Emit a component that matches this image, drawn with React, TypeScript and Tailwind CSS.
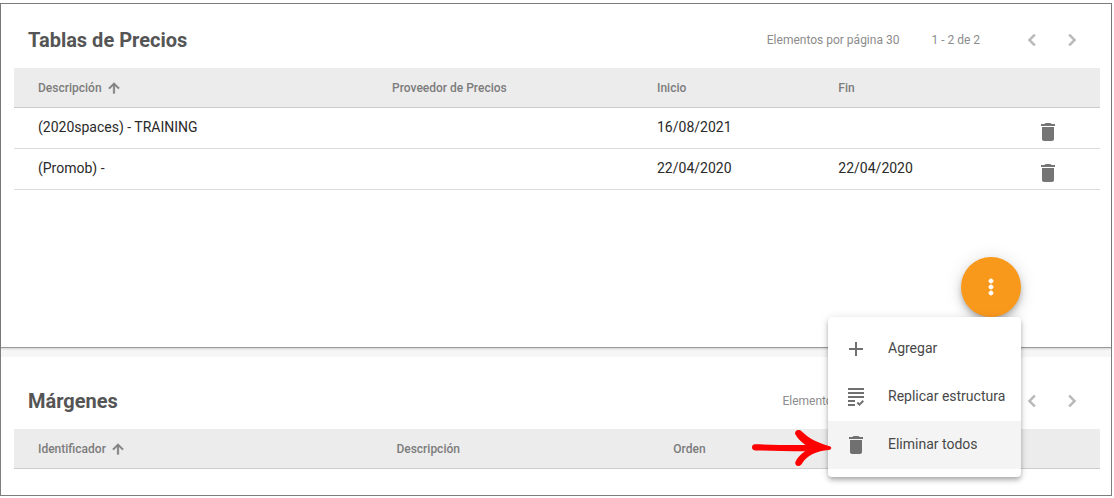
import type { ReactNode } from 'react';
import {
  MdAdd,
  MdArrowUpward,
  MdChevronLeft,
  MdChevronRight,
  MdDelete,
  MdGrading,
  MdMoreVert,
} from 'react-icons/md';

type PriceTable = { description: string; provider: string; start: string; end: string };

const priceTables: PriceTable[] = [
  { description: '(2020spaces) - TRAINING', provider: '', start: '16/08/2021', end: '' },
  { description: '(Promob) -', provider: '', start: '22/04/2020', end: '22/04/2020' },
];

function Pager({ range }: { range?: string }) {
  return (
    <div className="flex items-center text-xs text-[#8c8c8c]">
      <span className="mr-8">Elementos por página 30</span>
      <span className={range ? 'mr-8' : 'mr-8 w-[33px]'}>{range}</span>
      <button type="button" aria-label="Página anterior" className="flex size-10 items-center justify-center text-[#b9b9b9]">
        <MdChevronLeft size={24} className="[&>path:last-child]:stroke-[0.6]" />
      </button>
      <button type="button" aria-label="Página siguiente" className="flex size-10 items-center justify-center text-[#b9b9b9]">
        <MdChevronRight size={24} className="[&>path:last-child]:stroke-[0.6]" />
      </button>
    </div>
  );
}

function SectionHeader({ title, range }: { title: string; range?: string }) {
  return (
    <header className="flex h-16 items-center justify-between pt-2 pr-[19px] pl-[27px]">
      <h2 className="text-xl font-bold text-[#555]">{title}</h2>
      <Pager range={range} />
    </header>
  );
}

function HeadCell({ children, sorted }: { children?: ReactNode; sorted?: boolean }) {
  return (
    <th scope="col" className="h-[39px] pt-0.5 pl-6 text-left text-xs font-medium text-[#7c7c7c]">
      <span className="flex items-center gap-1">
        {children}
        {sorted && <MdArrowUpward size={16} className="[&>path:last-child]:stroke-1" />}
      </span>
    </th>
  );
}

function MenuItem({ icon, label, active }: { icon: ReactNode; label: string; active?: boolean }) {
  return (
    <button
      type="button"
      role="menuitem"
      className={`flex h-12 w-full items-center gap-5 pl-4 text-left text-sm whitespace-nowrap text-[#484848] ${active ? 'bg-[#f4f4f4]' : 'bg-white'}`}
    >
      <span className="w-6 text-[#707070]">{icon}</span>
      <span className="pb-0.5">{label}</span>
    </button>
  );
}

function ActionsMenu() {
  return (
    <div className="absolute right-[90px] bottom-[30px] z-10">
      <button
        type="button"
        aria-label="Acciones"
        className="flex size-[60px] items-center justify-center rounded-full bg-[#f9991c] text-white shadow-[0_3px_5px_-1px_rgba(0,0,0,0.2),0_6px_10px_rgba(0,0,0,0.14),0_1px_18px_rgba(0,0,0,0.12)]"
      >
        <MdMoreVert size={24} className="[&>path:last-child]:stroke-1" />
      </button>
      <div
        role="menu"
        className="absolute top-full right-0 w-[193px] rounded bg-white py-2 shadow-[0_2px_4px_-1px_rgba(0,0,0,0.2),0_4px_5px_rgba(0,0,0,0.14),0_1px_10px_rgba(0,0,0,0.12)]"
      >
        <MenuItem icon={<MdAdd size={24} />} label="Agregar" />
        <MenuItem icon={<MdGrading size={24} />} label="Replicar estructura" />
        <div className="relative">
          <MenuItem icon={<MdDelete size={24} />} label="Eliminar todos" active />
          <svg aria-hidden="true" viewBox="0 0 80 38" className="absolute top-2 -left-[76px] h-[38px] w-20">
            <path
              d="M3 15.2C.8 15.3 0 16.7 0 18.3c0 1.8 1.2 3 3.2 3.1 13.5.3 31 .8 50 .9-4.700 3-8 6.700-9.600 10.200-1 2.300.4 4.500 2.800 4.500 2 0 3-1.400 4.300-3.500 5.300-7.500 14-11.500 26-12.500 1.800-.2 2.500-.9 2.500-2s-.8-1.900-2.300-2.100C65.500 13.700 57 9.500 50.400 3 48.800 1.300 47.600 1 46.200 1c-2.600.1-4 2.700-2.600 4.800 2.100 3.700 5.300 7 9.800 10.100C36 16.100 19 15.600 3 15.200Z"
              fill="#f00"
            />
          </svg>
        </div>
      </div>
    </div>
  );
}

export default function App() {
  return (
    <div className="min-h-screen bg-white pt-[3px] pr-0.5 pb-0.5 font-[Roboto,sans-serif]">
      <main className="border border-[#7d7d7d] bg-[#f6f6f6]">
        <section className="relative min-h-[344px] border-b border-[#999] bg-white shadow-[0_1px_2px_rgba(0,0,0,0.15)]">
          <SectionHeader title="Tablas de Precios" range="1 - 2 de 2" />
          <div className="pr-[11px] pl-[13px]">
            <table className="w-full table-fixed border-collapse">
              <colgroup>
                <col className="w-[32.6%]" />
                <col className="w-[24.4%]" />
                <col className="w-[16.7%]" />
                <col className="w-[18.2%]" />
                <col />
              </colgroup>
              <thead>
                <tr className="border-b border-[#ccc] bg-[#ececec]">
                  <HeadCell sorted>Descripción</HeadCell>
                  <HeadCell>Proveedor de Precios</HeadCell>
                  <HeadCell>Inicio</HeadCell>
                  <HeadCell>Fin</HeadCell>
                  <td />
                </tr>
              </thead>
              <tbody className="text-sm text-[#2a2a2a]">
                {priceTables.map((row) => (
                  <tr key={row.description} className="h-[41px] border-b border-[#dcdcdc]">
                    <td className="pb-0.5 pl-6">{row.description}</td>
                    <td className="pb-0.5 pl-6">{row.provider}</td>
                    <td className="pb-0.5 pl-6">{row.start}</td>
                    <td className="pb-0.5 pl-6">{row.end}</td>
                    <td className="pl-6">
                      <button type="button" aria-label={`Eliminar ${row.description}`} className="block pt-2 text-[#757575]">
                        <MdDelete size={24} />
                      </button>
                    </td>
                  </tr>
                ))}
              </tbody>
            </table>
          </div>
          <ActionsMenu />
        </section>

        <section className="mt-[9px] bg-white pt-2 pb-[26px]">
          <SectionHeader title="Márgenes" />
          <div className="pr-[11px] pl-[13px]">
            <table className="w-full table-fixed border-collapse">
              <colgroup>
                <col className="w-[33%]" />
                <col className="w-[25.5%]" />
                <col />
              </colgroup>
              <thead>
                <tr className="border-b border-[#ccc] bg-[#ececec]">
                  <HeadCell sorted>Identificador</HeadCell>
                  <HeadCell>Descripción</HeadCell>
                  <HeadCell>Orden</HeadCell>
                </tr>
              </thead>
            </table>
          </div>
        </section>
      </main>
    </div>
  );
}
